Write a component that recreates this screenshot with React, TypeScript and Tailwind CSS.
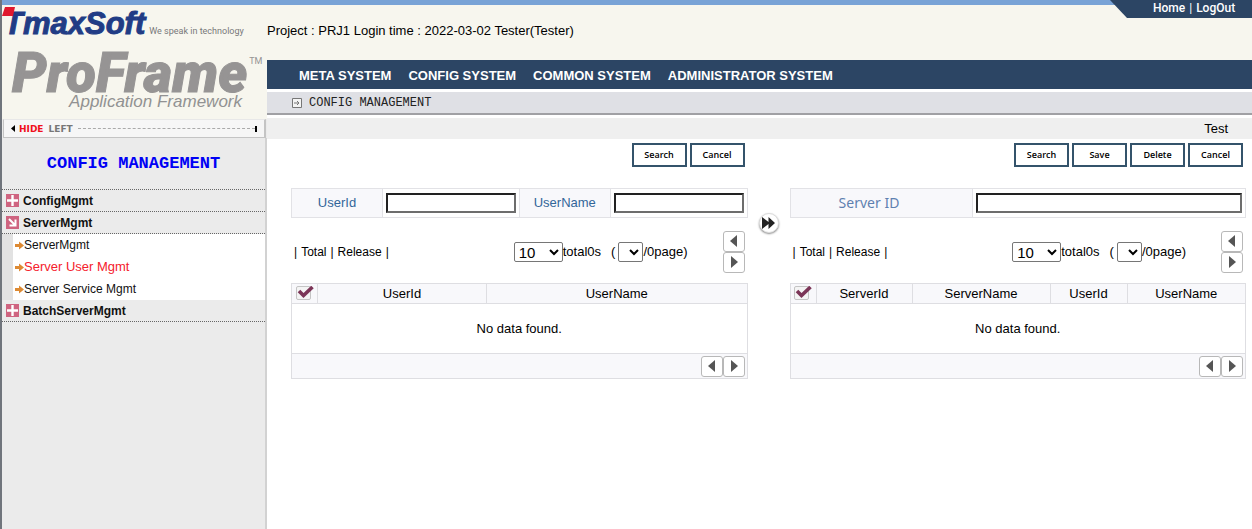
import { useState } from 'react';
import type { ReactNode } from 'react';

const SYSTEMS = ['META SYSTEM', 'CONFIG SYSTEM', 'COMMON SYSTEM', 'ADMINISTRATOR SYSTEM'];
const SERVER_PAGES = ['ServerMgmt', 'Server User Mgmt', 'Server Service Mgmt'];

const USER_COLUMNS = [
  { name: 'UserId', width: 'w-[169px]' },
  { name: 'UserName', width: 'w-auto' },
];

const SERVER_COLUMNS = [
  { name: 'ServerId', width: 'w-24' },
  { name: 'ServerName', width: 'w-[138px]' },
  { name: 'UserId', width: 'w-[77px]' },
  { name: 'UserName', width: 'w-auto' },
];

const INPUT_CLASS =
  'block w-full h-5 px-1 bg-white border-2 border-t-[#222] border-l-[#222] border-b-[#6d6d6d] border-r-[#6d6d6d] outline-none';

function MenuIcon({ open }: { open?: boolean }) {
  return (
    <svg width="13" height="13" viewBox="0 0 13 13" className="shrink-0">
      <rect width="13" height="13" fill="#cf6480" />
      {open ? (
        <path d="M3 3l6 6M9.5 3.500v6H3.500" stroke="#fff" strokeWidth="2" fill="none" />
      ) : (
        <path d="M6.5 1v11M1 6.5h11" stroke="#fff" strokeWidth="2.4" fill="none" />
      )}
    </svg>
  );
}

function MenuGroup({ name, open }: { name: string; open?: boolean }) {
  return (
    <button className="flex w-full h-[22px] items-center gap-1 pl-1 border-b border-dotted border-[#666] text-xs font-bold text-[#111] text-left">
      <MenuIcon open={open} />
      {name}
    </button>
  );
}

function ActionButton({ children }: { children: ReactNode }) {
  return (
    <button className="w-[55px] h-6 bg-white border-2 border-[#34536b] font-['Open_Sans',sans-serif] text-[9px] font-semibold text-black">
      {children}
    </button>
  );
}

function PageButton({ dir }: { dir: 'prev' | 'next' }) {
  return (
    <button
      aria-label={dir}
      className="flex w-[22px] h-[21px] items-center justify-center bg-white border border-[#b8b8b8] rounded-[3px]"
    >
      <svg width="8" height="14" viewBox="0 0 8 14">
        <path d={dir === 'prev' ? 'M7 1v12L0 7z' : 'M1 1v12l7-6z'} fill="#555" />
      </svg>
    </button>
  );
}

function PagingBar() {
  return (
    <div className="flex h-[41px] mt-[13px] items-center pr-[3px]">
      <div className="flex gap-1 pl-[3px] text-xs">
        <span>|</span>
        <button>Total</button>
        <span>|</span>
        <button>Release</button>
        <span>|</span>
      </div>
      <div className="flex ml-auto items-center">
        <select aria-label="Rows per page" className="w-[49px] h-5 bg-white border border-[#767676] rounded-[2px] text-[15px]">
          <option>10</option>
        </select>
        <span>total0s</span>
        <span className="ml-[10px] mr-[3px]">(</span>
        <select aria-label="Page" className="w-[25px] h-5 bg-white border border-[#767676] rounded-[2px] text-[15px]" />
        <span>/0page)</span>
      </div>
      <div className="flex flex-col ml-[35px]">
        <PageButton dir="prev" />
        <PageButton dir="next" />
      </div>
    </div>
  );
}

function CheckAll() {
  const [checked, setChecked] = useState(true);
  return (
    <label className="relative block w-[18px] h-[15px] mx-auto">
      <input
        type="checkbox"
        aria-label="Select all"
        checked={checked}
        onChange={() => setChecked(!checked)}
        className="appearance-none block w-[15px] h-[14px] bg-[#f4f4f4] border border-[#c4c4c4] rounded-[2px]"
      />
      {checked && (
        <svg width="18" height="13" viewBox="0 0 18 13" className="absolute left-0 top-0 pointer-events-none">
          <path d="M3 5l4.5 4.500L16.500 1" stroke="#7b3557" strokeWidth="3.600" fill="none" />
        </svg>
      )}
    </label>
  );
}

function DataTable({ columns }: { columns: { name: string; width: string }[] }) {
  return (
    <table className="w-full mt-[11px] table-fixed border-collapse border border-[#dedee2] text-center">
      <thead className="bg-[#f8f8fb]">
        <tr className="h-5">
          <th className="w-[26px] border border-[#dedee2]">
            <CheckAll />
          </th>
          {columns.map((col) => (
            <th key={col.name} className={`${col.width} border border-[#dedee2] font-normal leading-[18px]`}>
              {col.name}
            </th>
          ))}
        </tr>
      </thead>
      <tbody>
        <tr className="h-[50px]">
          <td colSpan={columns.length + 1}>No data found.</td>
        </tr>
      </tbody>
      <tfoot className="bg-[#f8f8fb] border-t border-[#dedee2]">
        <tr className="h-[25px]">
          <td colSpan={columns.length + 1}>
            <div className="flex justify-end pr-[2px]">
              <PageButton dir="prev" />
              <PageButton dir="next" />
            </div>
          </td>
        </tr>
      </tfoot>
    </table>
  );
}

export default function App() {
  const [page, setPage] = useState('Server User Mgmt');

  return (
    <div className="min-h-screen flex flex-col bg-white border-l-2 border-[#70757c] font-['Liberation_Sans',Arial,sans-serif] text-[13px] leading-4 text-black">
      <div className="flex flex-1">
        <aside className="w-[265px] shrink-0 flex flex-col bg-[#ebebeb]">
          <div className="h-[119px] bg-[#f7f6ee] border-t-[5px] border-[#79a3d6]">
            <div className="relative flex items-baseline gap-1 pl-[2px] h-9 whitespace-nowrap">
              <svg width="13" height="10" viewBox="0 0 13 10" className="absolute left-0 top-[2px]">
                <path d="M3 0h10l-2 9H0z" fill="#e0182d" />
              </svg>
              <span className="text-[31px] leading-[38px] font-bold italic text-[#213c85] [-webkit-text-stroke:1px_#213c85]">
                TmaxSoft
              </span>
              <span className="font-['Roboto',sans-serif] text-[9px] text-[#77787a]">We speak in technology</span>
            </div>
            <div className="flex pl-[10px] h-[50px] font-['Roboto',sans-serif] text-[#969494]">
              <span className="text-[55px] leading-[64px] font-black italic [-webkit-text-stroke:1px_#969494]">ProFrame</span>
              <span className="mt-3 ml-[2px] text-[9px]">TM</span>
            </div>
            <div className="pr-[25px] text-right text-[17px] leading-[22px] italic text-[#929292]">Application Framework</div>
          </div>

          <button className="flex h-[19px] mx-px items-center bg-[#f6f6f6] border border-[#c4c4c4] border-t-[#e8e8e8] border-r-2 font-['DejaVu_Sans',sans-serif] text-[9px] font-bold px-[7px]">
            <svg width="4" height="7" viewBox="0 0 4 7" className="mr-1">
              <path d="M4 0v7L0 3.500z" fill="#000" />
            </svg>
            <span className="text-[#f0101c]">HIDE</span>
            <span className="ml-[5px] text-[#777]">LEFT</span>
            <span className="flex-1 ml-[5px] border-t border-dashed border-[#aaa]" />
            <span className="w-[2px] h-[6px] bg-black" />
          </button>

          <div className="flex-1 border-r-2 border-[#d2d2d2]">
            <h1 className="h-[52px] leading-[51px] border-b border-dotted border-[#666] text-center font-['Liberation_Mono',monospace] text-[17px] font-bold text-[#0000f5]">
              CONFIG MANAGEMENT
            </h1>
            <MenuGroup name="ConfigMgmt" />
            <MenuGroup name="ServerMgmt" open />
            <ul className="border-l-[11px] border-[#e2e2e2] bg-white">
              {SERVER_PAGES.map((name) => (
                <li key={name} className="h-[22px] pl-[2px]">
                  <a
                    href="#"
                    onClick={() => setPage(name)}
                    className={`flex h-full items-center ${page === name ? 'text-[13px] text-[#f5202c]' : 'text-xs text-[#111]'}`}
                  >
                    <svg width="9" height="9" viewBox="0 0 9 9">
                      <path d="M0 3h4V0.500L9 4.500 4 8.500V6H0z" fill="#dd8a33" />
                    </svg>
                    {name}
                  </a>
                </li>
              ))}
            </ul>
            <MenuGroup name="BatchServerMgmt" />
          </div>
        </aside>

        <div className="flex-1 min-w-0">
          <header className="bg-[#f7f6ee]">
            <div className="flex h-[60px] border-t-[5px] border-[#79a3d6] justify-between">
              <p className="mt-[18px]">Project : PRJ1 Login time : 2022-03-02 Tester(Tester)</p>
              <div className="relative flex gap-1 w-[142px] h-[18px] -mt-[5px] pl-[43px] bg-[#2c4564] font-['Roboto',sans-serif] text-xs font-medium text-white [clip-path:polygon(0_0,100%_0,100%_100%,17px_100%)]">
                <a href="#">Home</a>
                <span className="font-normal">|</span>
                <a href="#">LogOut</a>
              </div>
            </div>
            <nav className="flex h-[29px] items-center gap-[17px] pt-[2px] pl-8 bg-[#2c4564] text-[13px] font-bold text-white">
              {SYSTEMS.map((name) => (
                <a key={name} href="#">
                  {name}
                </a>
              ))}
            </nav>
            <div className="flex h-[26px] items-center gap-[7px] pl-[25px] border-t-[3px] border-b-2 border-t-white border-b-[#a0a0a4] bg-[#dfe0e5] font-['Liberation_Mono',monospace] text-xs text-[#222]">
              <svg width="10" height="10" viewBox="0 0 10 10">
                <path d="M.5.5h9v9h-9zM2 5h5M5 3l2 2-2 2" stroke="#777" fill="#f4f4f4" />
              </svg>
              CONFIG MANAGEMENT
            </div>
          </header>
          <div className="mt-[3px] h-[21px] pr-6 bg-[#efefef] text-right leading-[22px]">Test</div>

          <main className="grid grid-cols-[1fr_42px_1fr] pl-6 pr-[6px] pt-1">
            <section>
              <div className="flex justify-end gap-[3px] pr-[3px]">
                <ActionButton>Search</ActionButton>
                <ActionButton>Cancel</ActionButton>
              </div>
              <div className="grid grid-cols-[91px_1fr_92px_1fr] h-[30px] mt-[21px] border border-[#e2e2e6] text-center leading-7 text-[#336699]">
                <label htmlFor="userId" className="bg-[#f8f8fb] border-r border-[#e2e2e6]">
                  UserId
                </label>
                <div className="flex items-center px-[3px]">
                  <input id="userId" type="text" className={INPUT_CLASS} />
                </div>
                <label htmlFor="userName" className="bg-[#f8f8fb] border-x border-[#e2e2e6]">
                  UserName
                </label>
                <div className="flex items-center px-[3px]">
                  <input id="userName" type="text" className={INPUT_CLASS} />
                </div>
              </div>
              <PagingBar />
              <DataTable columns={USER_COLUMNS} />
            </section>

            <div className="flex justify-center pt-[70px]">
              <button
                aria-label="Move to server"
                className="flex w-5 h-5 items-center justify-center rounded-full bg-white border border-[#ddd] shadow-[0_1px_2px_#888]"
              >
                <svg width="13" height="12" viewBox="0 0 13 12" className="shrink-0">
                  <path d="M0 0l6.500 5V0L13 6l-6.500 6V7L0 12z" fill="#222" />
                </svg>
              </button>
            </div>

            <section>
              <div className="flex justify-end gap-[3px] pr-[3px]">
                <ActionButton>Search</ActionButton>
                <ActionButton>Save</ActionButton>
                <ActionButton>Delete</ActionButton>
                <ActionButton>Cancel</ActionButton>
              </div>
              <div className="grid grid-cols-[182px_1fr] h-[30px] mt-[21px] border border-[#e2e2e6] text-center leading-7">
                <label
                  htmlFor="serverId"
                  className="pr-6 bg-[#f8f8fb] border-r border-[#e2e2e6] font-['Noto_Sans',sans-serif] text-sm leading-7 text-[#5f80b0]"
                >
                  Server ID
                </label>
                <div className="flex items-center px-[3px]">
                  <input id="serverId" type="text" className={INPUT_CLASS} />
                </div>
              </div>
              <PagingBar />
              <DataTable columns={SERVER_COLUMNS} />
            </section>
          </main>
        </div>
      </div>
    </div>
  );
}
